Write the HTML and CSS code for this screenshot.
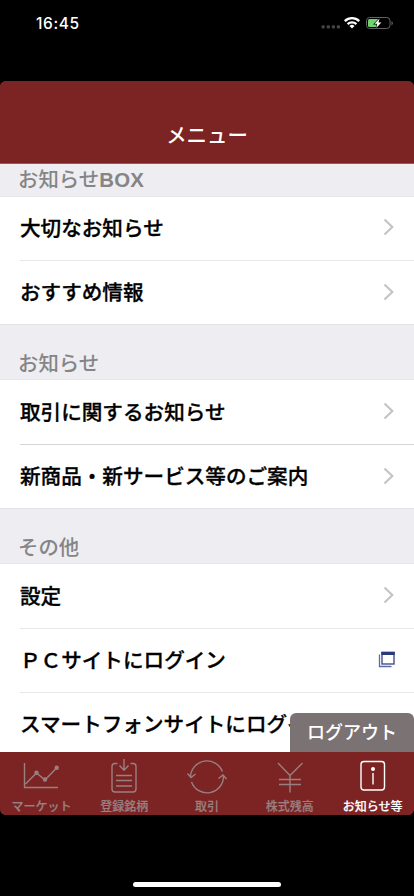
FILE: index.html
```html
<!DOCTYPE html>
<html lang="ja">
<head>
<meta charset="utf-8">
<title>メニュー</title>
<link rel="stylesheet" href="styles.css">
</head>
<body>
<div class="status">
  <span class="clock">16:45</span>
  <svg class="status-icons" width="76" height="16" viewBox="0 0 76 16">
    <g fill="#454545"><rect x="1.500" y="10.300" width="3.200" height="3.200" rx="1"/><rect x="6.700" y="10.300" width="3.200" height="3.200" rx="1"/><rect x="11.800" y="10.300" width="3.200" height="3.200" rx="1"/><rect x="16.800" y="10.300" width="3.200" height="3.200" rx="1"/></g>
    <g fill="none" stroke="#fff" stroke-width="2.3"><path d="M24.8 6.1a10.4 10.4 0 0 1 14.4 0"/><path d="M27.6 9.1a6.4 6.4 0 0 1 8.800 0"/></g>
    <path d="M32 13.4l-2.5-2.5a3.6 3.6 0 0 1 5 0z" fill="#fff"/>
    <rect x="46.5" y="2.5" width="23.500" height="11" rx="3.2" fill="none" stroke="#626262"/>
    <path d="M71.5 6v4.500q1.300-.6 1.300-2.200t-1.300-2.300z" fill="#626262"/>
    <path d="M49.500 4h8.500v8h-8.500q-1.500 0-1.500-1.500v-5q0-1.500 1.500-1.500z" fill="#6fd36f"/>
    <path d="M59.500 3.500l-5 5.300h2.800l-1.100 4.200 5.200-5.600h-2.900z" fill="#fff" stroke="#000" stroke-width="1.200" paint-order="stroke"/>
  </svg>
</div>
<div class="app">
  <header class="title">メニュー</header>
  <main class="list">
    <h2 class="section first">お知らせ<span class="latin">BOX</span></h2>
    <div class="row"><span class="label">大切なお知らせ</span><svg class="chevron" viewBox="0 0 12 18"><path d="M1.500 1.500L9.300 9l-7.800 7.500"/></svg></div>
    <div class="row last"><span class="label">おすすめ情報</span><svg class="chevron" viewBox="0 0 12 18"><path d="M1.500 1.500L9.300 9l-7.800 7.500"/></svg></div>
    <h2 class="section">お知らせ</h2>
    <div class="row dark"><span class="label">取引に関するお知らせ</span><svg class="chevron" viewBox="0 0 12 18"><path d="M1.500 1.500L9.300 9l-7.800 7.500"/></svg></div>
    <div class="row last"><span class="label">新商品・新サービス等のご案内</span><svg class="chevron" viewBox="0 0 12 18"><path d="M1.500 1.500L9.300 9l-7.800 7.500"/></svg></div>
    <h2 class="section">その他</h2>
    <div class="row"><span class="label">設定</span><svg class="chevron" viewBox="0 0 12 18"><path d="M1.500 1.500L9.300 9l-7.800 7.500"/></svg></div>
    <div class="row"><span class="label">ＰＣサイトにログイン</span><svg class="window" viewBox="0 0 17 17"><path d="M1.500 3.500v12h12" fill="none" stroke="#5a6ba5" stroke-width="1.300"/><rect x="4" y="1.500" width="12" height="11.500" fill="#fff" stroke="#42528e" stroke-width="1.400"/><path d="M3.300 .8h13.400v3.200H3.300z" fill="#283a7c"/></svg></div>
    <div class="row"><span class="label">スマートフォンサイトにログイン</span></div>
    <div class="logout">ログアウト</div>
  </main>
  <nav class="tabs">
    <div class="tab"><svg viewBox="0 0 44 40"><path d="M5.500 6v24.500H39M6.500 27L17.500 16l8.500 7L37.500 11"/><g class="dots"><circle cx="17.500" cy="15.800" r="1.500"/><circle cx="26" cy="22.500" r="1.500"/><circle cx="37.700" cy="10.800" r="1.500"/></g></svg><span>マーケット</span></div>
    <div class="tab"><svg viewBox="0 0 44 40"><path d="M15.500 6.500h-2.500q-3 0-3 3v22.500q0 3 3 3h18q3 0 3-3V9.500q0-3-3-3h-2.500M22 2v11M17.500 8.500l4.500 4.800 4.500-4.800M14 18.500h16M14 23.500h16M14 29h16"/></svg><span>登録銘柄</span></div>
    <div class="tab"><svg viewBox="0 0 44 40"><path d="M5.500 20A16.500 16.500 0 0 1 37.400 14.500M38.500 19A16.500 16.500 0 0 1 6.500 25M2.500 16.500L6 20.500l4.500-3.500M33.500 21.500l4.500-3.500 3.500 4"/></svg><span>取引</span></div>
    <div class="tab"><svg viewBox="0 0 44 40"><path d="M10 6l12 12.500L34.500 6M22 18.500V35.500M11 22.500h22M11 27.500h22"/></svg><span>株式残高</span></div>
    <div class="tab active"><svg viewBox="0 0 44 40"><rect x="10" y="4.500" width="23.500" height="28.500" rx="3"/><path d="M22 16v11.500"/><circle class="dots" cx="22" cy="12" r="1.300"/></svg><span>お知らせ等</span></div>
  </nav>
</div>
<div class="home"></div>
</body>
</html>
```
FILE: styles.css
```css
* { box-sizing: border-box; }
body {
  margin: 0;
  width: 414px;
  height: 896px;
  overflow: hidden;
  display: flex;
  flex-direction: column;
  background: #000;
  font-family: "Noto Sans CJK JP", sans-serif;
}
.status {
  height: 81px;
  flex: none;
  display: flex;
  justify-content: space-between;
  align-items: flex-start;
  padding: 15px 18px 0 36px;
  color: #fff;
}
.clock { font: 500 15.5px/17px Inter, sans-serif; letter-spacing: .6px; }
.app {
  height: 734px;
  flex: none;
  display: flex;
  flex-direction: column;
  border-radius: 6px;
  overflow: hidden;
  background: #7c2423;
}
.title {
  height: 83px;
  flex: none;
  padding-top: 38px;
  background: #7c2423;
  border-bottom: 1px solid #98595b;
  color: #fff;
  font-size: 20.4px;
  font-weight: 500;
  line-height: 30px;
  text-align: center;
}
.list {
  height: 587.5px;
  flex: none;
  overflow: hidden;
  position: relative;
  background: #fff;
}
.section {
  margin: 0;
  height: 55.2px;
  padding: 22px 18px 0;
  background: #eeedf2;
  border-bottom: 1px solid #e7e7e9;
  color: #858585;
  font-size: 20.4px;
  font-weight: 500;
  line-height: 30px;
}
.section.first { height: 32.5px; padding-top: 0; line-height: 28px; }
.latin { font-family: "Liberation Sans", sans-serif; font-weight: 700; letter-spacing: .3px; }
.row {
  height: 64.4px;
  margin-left: 20px;
  padding: 0 19px 2px 0;
  display: flex;
  align-items: center;
  justify-content: space-between;
  border-bottom: 1px solid #e8e8e8;
  color: #000;
  font-size: 20.6px;
  font-weight: 500;
  line-height: 30px;
  white-space: nowrap;
}
.label { padding-bottom: 1px; -webkit-text-stroke: .3px #000; }
.row.dark { border-color: #d5d5d5; }
.row.last { margin-left: 0; padding-left: 20px; border-color: #e1e1e3; }
.chevron { width: 12px; height: 18px; fill: none; stroke: #c5c5c9; stroke-width: 2.2; }
.window { width: 17px; height: 17px; }
.logout {
  position: absolute;
  right: 0;
  bottom: 0;
  width: 124px;
  height: 38.5px;
  border-radius: 6px 6px 0 0;
  background: #7b7373;
  color: #fff;
  font-size: 18px;
  font-weight: 500;
  line-height: 36px;
  text-align: center;
}
.tabs {
  height: 63.5px;
  flex: none;
  display: grid;
  grid-template-columns: repeat(5, 1fr);
  background: #7c2423;
}
.tab {
  display: flex;
  flex-direction: column;
  align-items: center;
  padding-top: 5.500px;
  color: #998080;
  font-size: 12px;
  font-weight: 500;
  line-height: 17px;
  white-space: nowrap;
}
.tab span { -webkit-text-stroke: .2px currentColor; }
.tab svg { width: 44px; height: 40px; fill: none; stroke: currentColor; stroke-width: 1.4; }
.tab .dots { fill: currentColor; }
.tab.active { color: #fff; }
.home {
  width: 148px;
  height: 5px;
  margin: 67px 0 0 133px;
  flex: none;
  border-radius: 3px;
  background: #fff;
}
```
